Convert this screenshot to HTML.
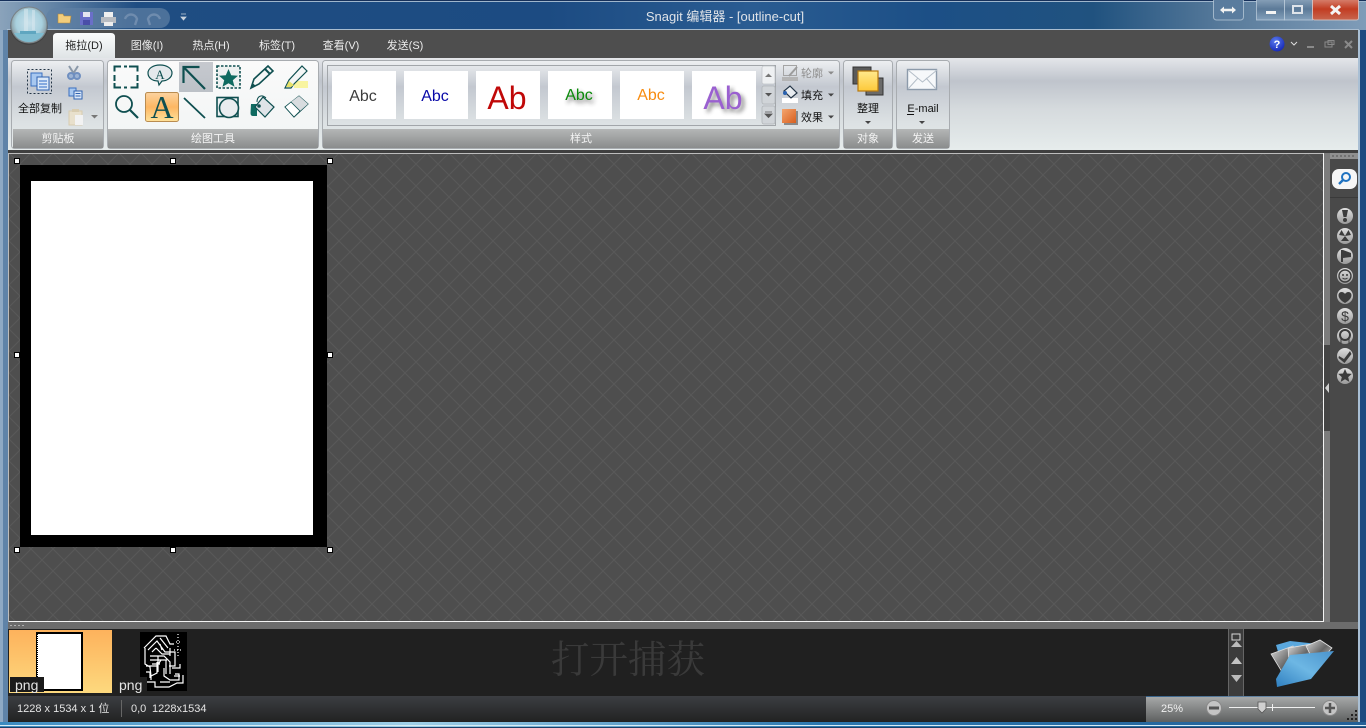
<!DOCTYPE html>
<html><head><meta charset="utf-8"><title>Snagit 编辑器</title>
<style>
html,body{margin:0;padding:0;width:1366px;height:728px;overflow:hidden;background:#1a4a80}
svg{display:block}
text{font-family:"Liberation Sans","Noto Sans CJK SC",sans-serif;font-size:11px}
.c{fill:#f4f4f4;text-anchor:middle;font-size:11px}
.tab{fill:#ececec;text-anchor:middle;font-size:11px}
.k{fill:#111;text-anchor:middle}
</style></head><body>
<svg width="1366" height="728" viewBox="0 0 1366 728" xmlns="http://www.w3.org/2000/svg">
<defs>
<linearGradient id="tb" x1="0" x2="1" y1="0" y2="0">
<stop offset="0" stop-color="#8aa3bb"/><stop offset=".03" stop-color="#6d8cab"/><stop offset=".1" stop-color="#1f4d82"/><stop offset=".4" stop-color="#1c4b82"/><stop offset=".55" stop-color="#2a5c92"/><stop offset=".68" stop-color="#1c4f86"/><stop offset=".8" stop-color="#20527f"/><stop offset=".9" stop-color="#5a7c9c"/><stop offset="1" stop-color="#7f9cb8"/>
</linearGradient>
<linearGradient id="rb" x1="0" x2="0" y1="0" y2="1"><stop offset="0" stop-color="#e4e6ea"/><stop offset=".25" stop-color="#bfc4cc"/><stop offset=".55" stop-color="#d5dadd"/><stop offset="1" stop-color="#e6ecec"/></linearGradient>
<linearGradient id="gp" x1="0" x2="0" y1="0" y2="1"><stop offset="0" stop-color="#eef0f2"/><stop offset=".3" stop-color="#c3c8d0"/><stop offset=".7" stop-color="#dce1e3"/><stop offset="1" stop-color="#e6ebeb"/></linearGradient>
<linearGradient id="gw" x1="0" x2="0" y1="0" y2="1"><stop offset="0" stop-color="#fafafa"/><stop offset="1" stop-color="#f1f4f4"/></linearGradient>
<linearGradient id="cp" x1="0" x2="0" y1="0" y2="1"><stop offset="0" stop-color="#b4b6b6"/><stop offset="1" stop-color="#8a8c8c"/></linearGradient>
<linearGradient id="tabg" x1="0" x2="0" y1="0" y2="1"><stop offset="0" stop-color="#fbfcfc"/><stop offset="1" stop-color="#dfe4e6"/></linearGradient>
<linearGradient id="hl" x1="0" x2="0" y1="0" y2="1"><stop offset="0" stop-color="#fbd3a0"/><stop offset=".5" stop-color="#fdb763"/><stop offset="1" stop-color="#ffe29a"/></linearGradient>
<linearGradient id="ar" x1="0" x2="0" y1="0" y2="1"><stop offset="0" stop-color="#c6c9cf"/><stop offset="1" stop-color="#bcc1c7"/></linearGradient>
<linearGradient id="th" x1="0" x2="0" y1="0" y2="1"><stop offset="0" stop-color="#fdb25c"/><stop offset="1" stop-color="#fdd97e"/></linearGradient>
<linearGradient id="st" x1="0" x2="0" y1="0" y2="1"><stop offset="0" stop-color="#3c3e42"/><stop offset="1" stop-color="#222"/></linearGradient>
<linearGradient id="sr" x1="0" x2="0" y1="0" y2="1"><stop offset="0" stop-color="#a6a8a8"/><stop offset="1" stop-color="#5e6060"/></linearGradient>
<linearGradient id="cl" x1="0" x2="0" y1="0" y2="1"><stop offset="0" stop-color="#d98a78"/><stop offset=".5" stop-color="#c23c22"/><stop offset="1" stop-color="#c8664e"/></linearGradient>
<linearGradient id="mn" x1="0" x2="0" y1="0" y2="1"><stop offset="0" stop-color="#8ea6bd"/><stop offset=".5" stop-color="#5c7a98"/><stop offset="1" stop-color="#83a0bb"/></linearGradient>
<linearGradient id="bb" x1="0" x2="1" y1="0" y2="0"><stop offset="0" stop-color="#3a8ac0"/><stop offset=".3" stop-color="#9fd0e8"/><stop offset=".6" stop-color="#2c78b0"/><stop offset="1" stop-color="#245f96"/></linearGradient>
<linearGradient id="org" x1="0" x2="1" y1="0" y2="1"><stop offset="0" stop-color="#f4a56e"/><stop offset="1" stop-color="#d85f1e"/></linearGradient>
<linearGradient id="yl" x1="0" x2="0" y1="0" y2="1"><stop offset="0" stop-color="#ffe98c"/><stop offset="1" stop-color="#fdc93a"/></linearGradient>
<linearGradient id="fo" x1="0" x2="1" y1="1" y2="0"><stop offset="0" stop-color="#2f7fc0"/><stop offset=".5" stop-color="#6db7e4"/><stop offset="1" stop-color="#4a93cc"/></linearGradient>
<linearGradient id="ph" x1="0" x2="1" y1="0" y2="1"><stop offset="0" stop-color="#dcdcdc"/><stop offset=".5" stop-color="#666"/><stop offset="1" stop-color="#d8d8d8"/></linearGradient>
<radialGradient id="orb" cx=".5" cy=".45" r=".6"><stop offset="0" stop-color="#c8e0ea"/><stop offset=".6" stop-color="#a8d0de"/><stop offset="1" stop-color="#7a8286"/></radialGradient>
<radialGradient id="bl" cx=".4" cy=".3" r=".8"><stop offset="0" stop-color="#5a7cf0"/><stop offset="1" stop-color="#1020b0"/></radialGradient>
<linearGradient id="ic" x1="0" x2="0" y1="0" y2="1"><stop offset="0" stop-color="#e0e0e0"/><stop offset="1" stop-color="#9a9a9a"/></linearGradient>
<pattern id="dm" width="22" height="22" patternUnits="userSpaceOnUse" x="9" y="153">
<rect width="22" height="22" fill="#4e4e4e"/>
<path d="M0 0L22 22M22 0L0 22" stroke="#585858" stroke-width="1" fill="none"/>
</pattern>
<filter id="sh" x="-30%" y="-30%" width="170%" height="170%"><feGaussianBlur stdDeviation="2"/></filter>
</defs>

<!-- window frame -->
<rect width="1366" height="728" fill="url(#tb)"/>
<rect x="0" y="0" width="1366" height="1" fill="#16305a"/>
<rect x="0" y="1" width="1366" height="1" fill="#9fb6cc"/>
<rect x="0" y="30" width="8" height="698" fill="#5f83a8"/>
<rect x="0" y="30" width="3" height="698" fill="#8ea9c4"/>
<rect x="1358" y="30" width="8" height="698" fill="#1b4a80"/>
<rect x="1358" y="30" width="2" height="698" fill="#a9bfd4"/>
<rect x="0" y="722" width="1366" height="6" fill="url(#bb)"/>
<rect x="0" y="725" width="1366" height="1" fill="#d8ecf4"/>
<rect x="0" y="727" width="1366" height="1" fill="#1b3f68"/>

<!-- tab band -->
<rect x="7" y="29" width="1352" height="1" fill="#a9bdd0"/>
<rect x="8" y="30" width="1350" height="28" fill="#4e4e4e"/>

<!-- QAT -->
<rect x="46" y="8" width="124" height="20" rx="10" fill="#5f80a4" opacity=".7"/>
<path d="M58 14l5 0 1 2 7 0-1 7-12 0z" fill="#f2cd7c" stroke="#b58a3a" stroke-width=".6"/>
<rect x="80" y="12" width="13" height="13" fill="#6a6fc8"/><rect x="83" y="12" width="7" height="5" fill="#e6e6f0"/><rect x="83" y="20" width="7" height="5" fill="#4a4ea8"/>
<rect x="101" y="17" width="15" height="6" fill="#b8bcc2"/><rect x="104" y="12" width="9" height="5" fill="#f0f0f0"/><rect x="104" y="22" width="9" height="4" fill="#eee"/>
<path d="M125 19c2-6 10-6 12 0l-2 6" fill="none" stroke="#6f8cae" stroke-width="2.400"/>
<path d="M150 25l-2-6c2-6 10-6 12 0" fill="none" stroke="#6f8cae" stroke-width="2.400"/>
<path d="M181 14h5M181 17h5l-2.500 3z" stroke="#c8d2dc" fill="#c8d2dc" stroke-width=".8"/>

<!-- orb -->
<circle cx="29" cy="26" r="19" fill="#333" opacity=".4"/>
<circle cx="29" cy="25" r="18" fill="url(#orb)" stroke="#7a8286"/>
<path d="M14 33h30c-3 6-9 9-15 9s-12-3-15-9z" fill="#7fbcd0"/>
<rect x="20" y="31" width="16" height="3" fill="#5fa6c0"/>
<rect x="24" y="9" width="4" height="22" fill="#dbe9ef" opacity=".55"/><rect x="32" y="10" width="3" height="20" fill="#dfecf1" opacity=".45"/>

<!-- title -->
<text x="725" y="21" text-anchor="middle" style="font-size:13px" fill="#dfe3e8">Snagit 编辑器 - [outline-cut]</text>

<!-- window buttons -->
<rect x="1213.500" y="-2" width="30" height="22" rx="3" fill="#5a7c9e" stroke="#c0d0de" stroke-opacity=".7"/>
<path d="M1220 10l4-3.500v2.300h8v-2.300l4 3.500-4 3.500v-2.300h-8v2.300z" fill="#f2f2f2"/>
<rect x="1256.500" y="-2" width="28" height="22" fill="url(#mn)" stroke="#c0d0de" stroke-opacity=".7"/>
<rect x="1284.500" y="-2" width="28" height="22" fill="url(#mn)" stroke="#c0d0de" stroke-opacity=".7"/>
<rect x="1312.500" y="-2" width="46" height="22" rx="2" fill="url(#cl)" stroke="#d8c8c8" stroke-opacity=".8"/>
<rect x="1266" y="11" width="10" height="3" fill="#f4f4f4"/>
<rect x="1293" y="6" width="9" height="7" fill="none" stroke="#dfe4ea" stroke-width="2"/>
<path d="M1331 6l9 8M1340 6l-9 8" stroke="#f4f4f4" stroke-width="3"/>

<!-- help etc -->
<circle cx="1277" cy="44" r="7.500" fill="url(#bl)"/>
<text x="1277" y="48" text-anchor="middle" fill="#fff" style="font-size:11px;font-weight:bold">?</text>
<path d="M1291 42l3 3 3-3" fill="none" stroke="#ddd"/>
<rect x="1307" y="46" width="7" height="2" fill="#8a8a8a"/>
<rect x="1325" y="42" width="7" height="5" fill="none" stroke="#8a8a8a"/><rect x="1328" y="40.500" width="6" height="4" fill="none" stroke="#8a8a8a"/>
<path d="M1345 41l7 7M1352 41l-7 7" stroke="#8a8a8a" stroke-width="2"/>

<!-- tabs -->
<path d="M53 58V37q0-4 4-4h54q4 0 4 4v21z" fill="url(#tabg)"/>
<text x="84" y="49" class="k" style="font-size:11px;fill:#222">拖拉(D)</text>
<text x="147" y="49" class="tab">图像(I)</text>
<text x="211" y="49" class="tab">热点(H)</text>
<text x="277" y="49" class="tab">标签(T)</text>
<text x="341" y="49" class="tab">查看(V)</text>
<text x="405" y="49" class="tab">发送(S)</text>

<!-- ribbon -->
<rect x="8" y="58" width="1350" height="92" fill="url(#rb)"/>
<rect x="8" y="150" width="1350" height="3" fill="#3f3f3f"/>

<!-- groups -->
<rect x="11.500" y="60.500" width="92" height="88" rx="3" fill="url(#gp)" stroke="#a8acb0"/>
<rect x="107.500" y="60.500" width="211" height="88" rx="3" fill="url(#gw)" stroke="#a8acb0"/>
<rect x="322.500" y="60.500" width="517" height="88" rx="3" fill="url(#gp)" stroke="#a8acb0"/>
<rect x="843.500" y="60.500" width="49" height="88" rx="3" fill="url(#gp)" stroke="#a8acb0"/>
<rect x="896.500" y="60.500" width="53" height="88" rx="3" fill="url(#gp)" stroke="#a8acb0"/>
<rect x="13" y="129" width="90" height="19" fill="url(#cp)"/>
<rect x="108" y="129" width="210" height="19" fill="url(#cp)"/>
<rect x="323" y="129" width="516" height="19" fill="url(#cp)"/>
<rect x="844" y="129" width="48" height="19" fill="url(#cp)"/>
<rect x="897" y="129" width="52" height="19" fill="url(#cp)"/>
<text x="58" y="142" class="c">剪贴板</text>
<text x="213" y="142" class="c">绘图工具</text>
<text x="581" y="142" class="c">样式</text>
<text x="868" y="142" class="c">对象</text>
<text x="923" y="142" class="c">发送</text>

<!-- clipboard icons -->
<rect x="27.500" y="69.500" width="24" height="24" fill="none" stroke="#234" stroke-dasharray="2 2"/>
<rect x="31" y="73" width="11" height="13" fill="#a8c8f0" stroke="#3a6fc0"/>
<rect x="37" y="77" width="12" height="13" fill="#dbe8f8" stroke="#2f62b0"/>
<path d="M39 81h8M39 84h8M39 87h8" stroke="#2f6cc8"/>
<text x="40" y="112" class="k" style="font-size:11px">全部复制</text>
<path d="M69 66l7 11M78 66l-7 11" stroke="#8a98a8" stroke-width="2"/>
<circle cx="71" cy="76" r="3" fill="#9db4d4" stroke="#6f8fc0" stroke-width="2"/><circle cx="77" cy="76" r="3" fill="#9db4d4" stroke="#6f8fc0" stroke-width="2"/>
<rect x="69" y="88" width="7" height="8" fill="#a8c8f0" stroke="#3a6fc0"/>
<rect x="74" y="91" width="8" height="8" fill="#dbe8f8" stroke="#2f62b0"/>
<path d="M75.500 93.500h5M75.500 96h5" stroke="#2f62b0"/>
<rect x="69" y="111" width="13" height="14" fill="#e8e0cc" stroke="#d8ccb0"/><rect x="72" y="109" width="7" height="3" fill="#d8ccb0"/><rect x="75" y="115" width="8" height="10" fill="#f2f2f2"/>
<path d="M91 115h7l-3.500 3.500z" fill="#777"/>

<!-- tool icons -->
<rect x="179" y="62" width="34" height="30" fill="url(#ar)"/>
<rect x="145.500" y="92.500" width="33" height="29" rx="2" fill="url(#hl)" stroke="#b98c50"/>
<path d="M121 66.500h-6.500v5M129 66.500h8.500v5M114.500 75v6M137.500 75v6M114.500 83v4.500h6.500M137.500 83v4.500h-7M124 66.500h3M124 87.500h3" fill="none" stroke="#0f4f50" stroke-width="2"/>
<path d="M160 65c7 0 12 3.500 12 8s-5 8-10 8l-3 4-1-4c-6 0-10-3.500-10-8s5-8 12-8z" fill="#e4e9ec" stroke="#0f4f50" stroke-width="1.200"/>
<text x="160" y="79" text-anchor="middle" style="font-family:'Liberation Serif',serif;font-size:13px" fill="#0f4f50">A</text>
<path d="M205 89L184 67.500M183.500 83V67h16" fill="none" stroke="#0f4f50" stroke-width="2.200"/>
<path d="M217 66h23v22h-23z" fill="#eef1f1" stroke="#0f4f50" stroke-width="1.600" stroke-dasharray="2.500 1.500"/>
<path d="M228.500 69l2.700 6.300 6.800.500-5.200 4.400 1.700 6.600-6-3.600-6 3.600 1.700-6.600-5.200-4.400 6.800-.500z" fill="#0f6a60"/>
<path d="M251 88l3-9 14-13 5 5-14 13z" fill="#f4f6f6" stroke="#0f4f50" stroke-width="1.600"/><path d="M265 69l5 5" stroke="#0f4f50" stroke-width="2"/><path d="M251 88l1.500-5 3.500 3z" fill="#0f4f50"/>
<rect x="294" y="81" width="14" height="7" fill="#f8f4a0"/>
<path d="M285 88l4-8 13-14 5 5-13 13-3 4z" fill="#f4f6f6" stroke="#0f4f50" stroke-width="1.200"/><path d="M286 87l3-6 5 4-3 2z" fill="#e8e26a"/>
<circle cx="124" cy="104" r="8" fill="none" stroke="#0f4f50" stroke-width="1.800"/><path d="M130 110l8 8" stroke="#0f4f50" stroke-width="2.200"/>
<text x="162" y="118" text-anchor="middle" style="font-family:'Liberation Serif',serif;font-size:32px" fill="#0f4f50">A</text>
<path d="M184 98l21 20" stroke="#0f4f50" stroke-width="1.800"/>
<rect x="217" y="97.500" width="21" height="19" fill="#eef2f4" stroke="#0f4f50" stroke-width="1.600"/>
<circle cx="229" cy="108" r="9.500" fill="#e8ecef" stroke="#0f4f50" stroke-width="1.600"/>
<path d="M251 104h6v12h-4q-2.500 0-2.500-3z" fill="#0f6a60"/>
<path d="M263 97l11 10-9 10-10-10z" fill="#dfe4e8" stroke="#0f4f50" stroke-width="1.200"/><path d="M257 102c0-6 5-8 9-4" fill="none" stroke="#0f4f50"/><circle cx="259" cy="106" r="1.800" fill="#0f4f50"/>
<path d="M285 107l14-11 9 8-14 13z" fill="#eef2f4" stroke="#0f4f50" stroke-width="1"/><path d="M291 102l9 9 8-7-9-8z" fill="#d8dcdf"/><path d="M285 107l6-5 9 9-6 6z" fill="#fff" stroke="#0f4f50" stroke-width=".8"/>

<!-- gallery -->
<rect x="327.500" y="65.500" width="448" height="60" fill="none" stroke="#a2a6aa"/>
<rect x="332" y="71" width="64" height="48" fill="#fff"/><rect x="404" y="71" width="64" height="48" fill="#fff"/><rect x="476" y="71" width="64" height="48" fill="#fff"/><rect x="548" y="71" width="64" height="48" fill="#fff"/><rect x="620" y="71" width="64" height="48" fill="#fff"/><rect x="692" y="71" width="64" height="48" fill="#fff"/>
<text x="363" y="101" text-anchor="middle" style="font-size:16px" fill="#3c3c3c">Abc</text>
<text x="435" y="101" text-anchor="middle" style="font-size:16px" fill="#0808a8">Abc</text>
<text x="507" y="109" text-anchor="middle" style="font-size:32px" fill="#c00808">Ab</text>
<text x="581" y="103" text-anchor="middle" style="font-size:16px" fill="#333" opacity=".75" filter="url(#sh)">Abc</text>
<text x="579" y="100" text-anchor="middle" style="font-size:16px" fill="#0a8a0a">Abc</text>
<text x="651" y="100" text-anchor="middle" style="font-size:16px" fill="#f88c10">Abc</text>
<text x="726" y="112" text-anchor="middle" style="font-size:32px" fill="#444" opacity=".7" filter="url(#sh)">Ab</text>
<text x="723" y="109" text-anchor="middle" style="font-size:32px" fill="#9a60d0">Ab</text>
<rect x="762" y="66" width="13" height="18" rx="2" fill="#eef0f2" stroke="#c0c4c8" stroke-width=".8"/>
<rect x="762" y="86" width="13" height="18" rx="2" fill="#d0d4d8" stroke="#b0b4b8" stroke-width=".8"/>
<rect x="762" y="106" width="13" height="18" rx="2" fill="#d0d4d8" stroke="#b0b4b8" stroke-width=".8"/>
<path d="M765 77h7l-3.500-3.500z" fill="#777"/><path d="M765 93h7l-3.500 3.500z" fill="#555"/><path d="M765 112h7M765 114h7l-3.500 3.500z" stroke="#555" stroke-width=".8" fill="#555"/>

<!-- outline/fill/effect -->
<rect x="782" y="77" width="16" height="4" fill="#b4b4b4"/>
<rect x="783.500" y="65.500" width="13" height="10" fill="none" stroke="#a4a4a4"/><path d="M789 76l8-9" stroke="#9c9c9c" stroke-width="2"/>
<text x="801" y="77" style="font-size:11px" fill="#909090">轮廓</text><path d="M828 71.500h6l-3 3z" fill="#8a8a8a"/>
<rect x="782" y="98" width="16" height="5" fill="#fff"/>
<path d="M790 86l7 7-6 5-7-7z" fill="#e8ecf0" stroke="#234" stroke-width="1.200"/><circle cx="785" cy="93" r="2" fill="#2a62b0"/>
<text x="801" y="99" style="font-size:11px" fill="#111">填充</text><path d="M828 93.500h6l-3 3z" fill="#444"/>
<rect x="784" y="111" width="14" height="14" fill="#8a8a8a"/><rect x="782" y="109" width="14" height="14" fill="url(#org)"/>
<text x="801" y="121" style="font-size:11px" fill="#111">效果</text><path d="M828 115.500h6l-3 3z" fill="#444"/>

<!-- object/send -->
<rect x="853" y="67" width="18" height="17" fill="#5a5a5a" stroke="#333"/>
<rect x="866" y="78" width="17" height="17" fill="#6a6a6a" stroke="#333"/>
<rect x="858" y="71" width="20" height="20" fill="url(#yl)" stroke="#b87a10" stroke-width="1.200"/>
<text x="868" y="112" class="k" style="font-size:11px">整理</text><path d="M865 121h6l-3 3z" fill="#444"/>
<rect x="907.500" y="69.500" width="29" height="20" fill="#f6f8fa" stroke="#8c9aaa" stroke-width="1.400"/><path d="M908 70l14.500 12 14.500-12M908 89l10-11M936 89l-10-11" fill="none" stroke="#b4bec8"/>
<text x="923" y="112" class="k" style="font-size:11px">E-mail</text><rect x="907" y="114" width="7" height="1" fill="#111"/><path d="M919 121h6l-3 3z" fill="#444"/>

<!-- canvas -->
<rect x="8" y="153" width="1316" height="469" fill="#bcbcbc"/>
<rect x="9" y="154" width="1314" height="467" fill="url(#dm)"/>
<rect x="1323" y="153" width="1" height="469" fill="#f4f4f4"/>
<rect x="9" y="621" width="1315" height="1" fill="#f4f4f4"/>
<rect x="20" y="165" width="307" height="382" fill="#000"/>
<rect x="31" y="181" width="282" height="354" fill="#fff"/>
<g fill="#fff" stroke="#000"><rect x="14.500" y="158.500" width="5" height="5"/><rect x="170.500" y="158.500" width="5" height="5"/><rect x="327.500" y="158.500" width="5" height="5"/><rect x="14.500" y="352.500" width="5" height="5"/><rect x="327.500" y="352.500" width="5" height="5"/><rect x="14.500" y="547.500" width="5" height="5"/><rect x="170.500" y="547.500" width="5" height="5"/><rect x="327.500" y="547.500" width="5" height="5"/></g>

<!-- right sidebar -->
<rect x="1324" y="153" width="6" height="470" fill="#7c7c7c"/>
<rect x="1324" y="345" width="6" height="86" fill="#444"/>
<path d="M1329 383v10l-4-5z" fill="#cfcfcf"/>
<rect x="1330" y="153" width="28" height="470" fill="#494949"/>
<rect x="1330" y="153" width="28" height="6" fill="#909090"/>
<path d="M1332 156h24" stroke="#555" stroke-dasharray="2 2"/>
<rect x="1332" y="169" width="25" height="20" rx="7" fill="#f6f6f6"/>
<circle cx="1346" cy="177" r="4" fill="none" stroke="#1f72c0" stroke-width="2"/><path d="M1343 180l-4 4" stroke="#1f72c0" stroke-width="2.400"/>
<rect x="1330" y="197" width="28" height="1" fill="#3a3a3a"/>
<g fill="url(#ic)"><circle cx="1345" cy="216" r="8"/><circle cx="1345" cy="236" r="8"/><circle cx="1345" cy="256" r="8"/><circle cx="1345" cy="276" r="8"/><circle cx="1345" cy="296" r="8"/><circle cx="1345" cy="316" r="8"/><circle cx="1345" cy="336" r="8"/><circle cx="1345" cy="356" r="8"/><circle cx="1345" cy="376" r="8"/></g>
<g fill="#3c3c3c">
<path d="M1342 210h6l-1.500 7h-3z"/><circle cx="1345" cy="220" r="2"/>
<path d="M1345 236l-6-1 2.500-5zM1345 236l6-1-2.500-5zM1345 236l-4 5 8 0z"/>
<path d="M1341 250h2v12h-2zM1343 250l8 3v4l-8 1z"/>
<circle cx="1345" cy="276" r="6" fill="none" stroke="#3c3c3c" stroke-width="1.400"/><circle cx="1343" cy="275" r="1"/><circle cx="1347" cy="275" r="1"/><path d="M1342.500 278q2.500 2 5 0" fill="none" stroke="#3c3c3c"/>
<path d="M1345 303c-9-5-7-11-3.500-11 1.500 0 3 1 3.500 2 .5-1 2-2 3.500-2 3.500 0 5.500 6-3.500 11z"/>
<text x="1345" y="321" text-anchor="middle" style="font-size:14px">$</text>
<circle cx="1345" cy="335" r="5" fill="none" stroke="#3c3c3c" stroke-width="2"/><path d="M1341 344v-5h1M1349 344v-5h-1" stroke="#3c3c3c" fill="none"/>
<path d="M1339 356l5 3 6-8 1.500 3-7 9-6-5z"/>
<path d="M1345 369l2 4.500 4.800.400-3.600 3.200 1.100 4.800-4.300-2.600-4.300 2.600 1.100-4.800-3.600-3.200 4.800-.400z"/>
</g>

<!-- splitter -->
<rect x="8" y="622" width="1350" height="7" fill="#6c6c6c"/>
<path d="M10 625.500h15" stroke="#b0b0b0" stroke-dasharray="2 2"/>

<!-- capture tray -->
<rect x="8" y="629" width="1350" height="67" fill="#202020"/>
<rect x="9" y="630" width="103" height="63" fill="url(#th)"/>
<rect x="36" y="632" width="47" height="59" fill="#000"/>
<rect x="38" y="634" width="43" height="55" fill="#fff"/>
<path d="M37.500 635v44" stroke="#fff" stroke-dasharray="1 1"/>
<rect x="10" y="677" width="34" height="15" fill="#1a1a1a"/>
<text x="15" y="690" style="font-size:14px" fill="#e4e4e4">png</text>
<rect x="140" y="632" width="47" height="59" fill="#000"/>
<g fill="none" stroke="#fff" stroke-width="1.200">
<path d="M144 648l12-12h10l4 8h4M145 648v16l5 3 1 9M148 650l9-9 8 11h10v14h-6M150 656h14l6 6v12M146 666l11 0 4-6h6M157 662v11l-6 3v4M164 668v8l6 4h9v-6h-4M147 682h8v5h14l8-4h6v-8M152 652l4-4M156 648l6 6h8M146 672h4v6M160 644l2 6M170 648v8M150 660h12M152 664h8M158 656v16M166 660v14M172 668h8v-4M174 676h6M160 682h10M160 638l8 10"/>
<path d="M178 634v24" stroke-dasharray="1 2"/>
<path d="M176 642h6M174 650h8" stroke-dasharray="1 2"/>
</g>
<rect x="115" y="677" width="32" height="15" fill="#202020"/>
<text x="119" y="690" style="font-size:14px" fill="#e4e4e4">png</text>
<text x="628" y="673" text-anchor="middle" style="font-size:38.500px;font-family:'Noto Serif CJK SC','Liberation Serif',serif" fill="#3a3a3a">打开捕获</text>
<rect x="1228" y="629" width="16" height="67" fill="#3c3c3c"/>
<rect x="1228" y="629" width="1" height="67" fill="#666"/><rect x="1243" y="629" width="1" height="67" fill="#666"/>
<rect x="1232" y="634" width="8" height="6" fill="none" stroke="#d8d8d8"/>
<path d="M1231 647h11l-5.500-6z" fill="#bcbcbc"/><path d="M1231 664h11l-5.500-7z" fill="#c4c4c4"/><path d="M1231 675h11l-5.500 7z" fill="#bcbcbc"/>
<!-- folder -->
<path d="M1276 645l14-4 28 3 1 8-32 30z" fill="#5aa8de"/>
<path d="M1271 654l22-8 8 24-14 10z" fill="url(#ph)" stroke="#ddd" stroke-width=".8"/>
<path d="M1288 648l24-4 2 20-24 8z" fill="url(#ph)" stroke="#e4e4e4" stroke-width=".8"/>
<path d="M1306 646l14-6 12 8-16 18z" fill="url(#ph)" stroke="#e4e4e4" stroke-width=".8"/>
<path d="M1277 687l-1-8 14-24 44-4-23 28z" fill="url(#fo)"/>

<!-- status -->
<rect x="8" y="696" width="1138" height="26" fill="url(#st)"/>
<text x="17" y="712" style="font-size:11px" fill="#e4e4e4">1228 x 1534 x 1 位</text>
<rect x="121" y="700" width="1" height="17" fill="#666"/>
<text x="131" y="712" style="font-size:11px" fill="#e4e4e4">0,0</text>
<text x="152" y="712" style="font-size:11px" fill="#e4e4e4">1228x1534</text>
<rect x="1146" y="697" width="212" height="25" fill="url(#sr)"/>
<text x="1161" y="712" style="font-size:11px" fill="#f0f0f0">25%</text>
<circle cx="1214" cy="708" r="7.500" fill="#c4c4c4" stroke="#888"/><rect x="1209" y="706.500" width="10" height="3" fill="#555"/>
<rect x="1229" y="707" width="86" height="1" fill="#f0f0f0"/>
<rect x="1272" y="704" width="1" height="7" fill="#f0f0f0"/>
<path d="M1258 702h8v7l-4 4-4-4z" fill="#d0d0d0" stroke="#555" stroke-width=".8"/>
<circle cx="1330" cy="708" r="7.500" fill="#c4c4c4" stroke="#888"/><path d="M1325 708h10M1330 703v10" stroke="#555" stroke-width="2.500"/>
<g fill="#222"><rect x="1355" y="710" width="2" height="2"/><rect x="1351" y="714" width="2" height="2"/><rect x="1355" y="714" width="2" height="2"/><rect x="1347" y="718" width="2" height="2"/><rect x="1351" y="718" width="2" height="2"/><rect x="1355" y="718" width="2" height="2"/></g>
</svg>
</body></html>
